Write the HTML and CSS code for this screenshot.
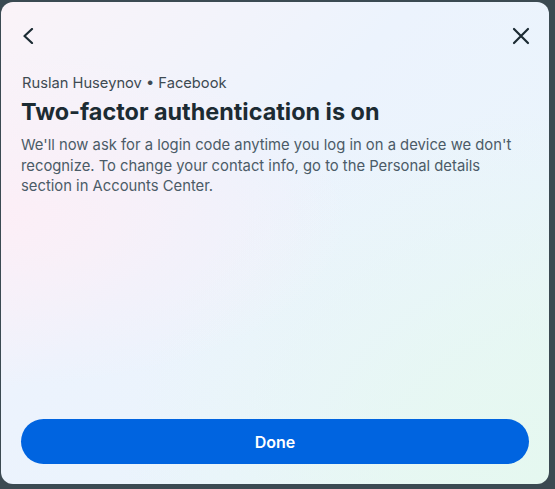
FILE: index.html
```html
<!DOCTYPE html>
<html>
<head>
<meta charset="utf-8">
<link rel="stylesheet" href="styles.css">
</head>
<body>
<div class="dialog">
  <div class="topbar">
    <button class="icon-btn back" aria-label="Back">
      <svg width="12" height="16" viewBox="0 0 12 16"><path d="M10 1 L2.5 8 L10 15" fill="none" stroke="#1c2b33" stroke-width="2.2" stroke-linecap="round" stroke-linejoin="round"/></svg>
    </button>
    <button class="icon-btn close" aria-label="Close">
      <svg width="18" height="18" viewBox="0 0 18 18"><path d="M2 2 L16 16 M16 2 L2 16" fill="none" stroke="#1c2b33" stroke-width="2.2" stroke-linecap="round"/></svg>
    </button>
  </div>
  <div class="content">
    <div class="account">Ruslan Huseynov • Facebook</div>
    <h1 class="title">Two-factor authentication is on</h1>
    <p class="desc">We'll now ask for a login code anytime you log in on a device we don't recognize. To change your contact info, go to the Personal details section in Accounts Center.</p>
  </div>
  <div class="footer">
    <button class="done">Done</button>
  </div>
</div>
</body>
</html>
```
FILE: styles.css
```css
html, body {
  margin: 0;
  padding: 0;
  height: 100%;
}
body {
  background: #3b4a52;
  font-family: Inter, "Noto Sans", sans-serif;
  padding: 2px 6px 5px 1px;
  box-sizing: border-box;
}
.dialog {
  height: 482px;
  border-radius: 12px;
  background:
    radial-gradient(ellipse at 0% 45%, rgba(253, 238, 246, 0.9) 0%, rgba(253, 238, 246, 0) 45%),
    radial-gradient(ellipse at 100% 100%, rgba(229, 248, 240, 1) 0%, rgba(229, 248, 240, 0) 55%),
    linear-gradient(135deg, #fbf3f8 0%, #ecf3fd 40%, #eaf4fc 70%, #e9f7f3 100%);
  display: flex;
  flex-direction: column;
  padding: 0 20px 20px 20px;
  box-sizing: border-box;
}
.topbar {
  display: flex;
  justify-content: space-between;
  align-items: center;
  height: 30px;
  margin-top: 19px;
}
.icon-btn {
  background: none;
  border: none;
  padding: 0;
  display: flex;
  align-items: center;
  justify-content: center;
  cursor: pointer;
}
.back { margin-left: 1px; }
.close { margin-right: -1px; }
.content {
  flex: 1;
  padding-top: 22px;
}
.account {
  font-size: 14.7px;
  color: #3e4a52;
  line-height: 20px;
  margin-left: 1px;
}
.title {
  margin: 4px 0 0 0;
  font-size: 23.4px;
  line-height: 30px;
  font-weight: 700;
  color: #1c2b33;
}
.desc {
  margin: 8px 0 0 0;
  font-size: 14.8px;
  line-height: 20.5px;
  color: #4b5b67;
}
.footer {
  display: flex;
}
.done {
  flex: 1;
  height: 45px;
  border: none;
  border-radius: 23px;
  background: #0064e0;
  color: #fff;
  font-family: Inter, "Noto Sans", sans-serif;
  font-size: 16px;
  font-weight: 600;
  cursor: pointer;
}
```
